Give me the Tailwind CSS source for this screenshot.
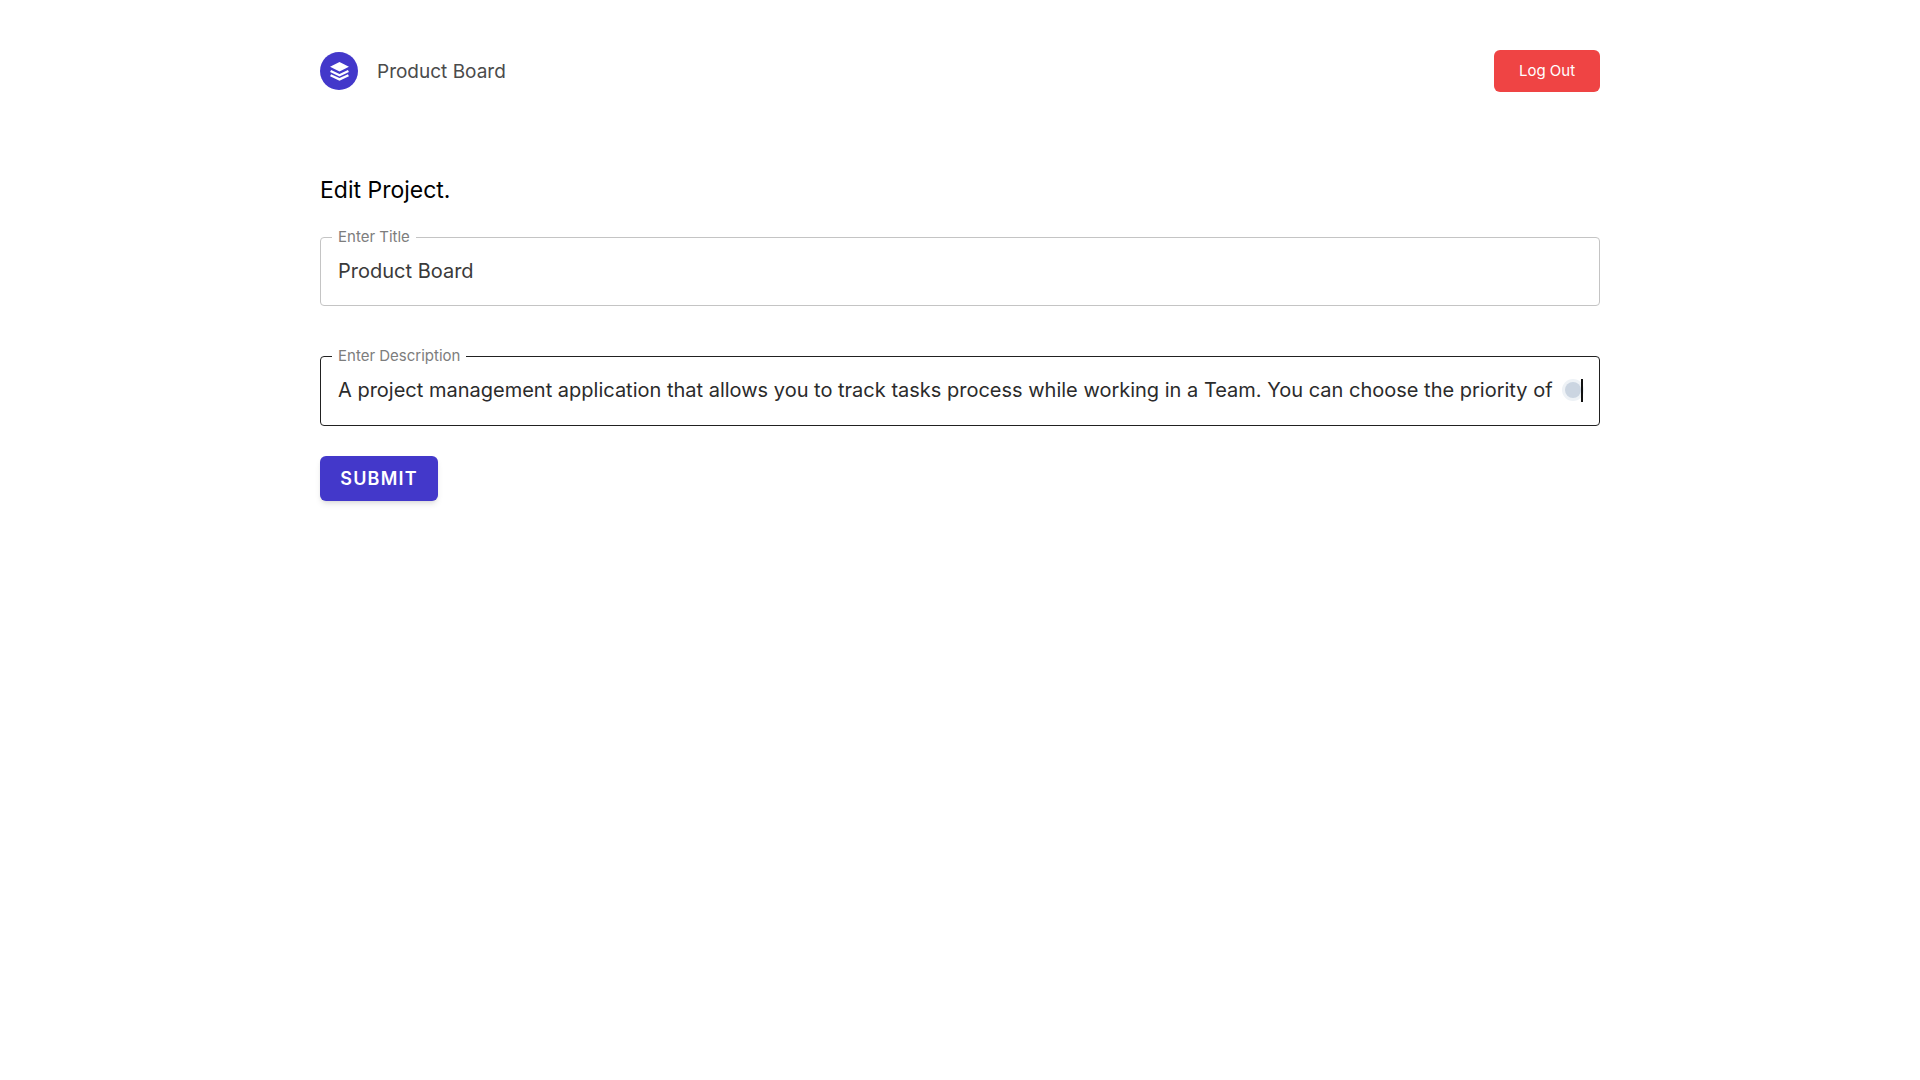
<!DOCTYPE html>
<html lang="en">
<head>
  <meta charset="UTF-8">
  <meta name="viewport" content="width=device-width, initial-scale=1.0">
  <title>Edit Project - Product Board</title>
  <script src="https://cdn.jsdelivr.net/npm/@tailwindcss/browser@4"></script>
</head>
<body class="bg-white min-h-screen font-['Inter',sans-serif]">

  <div class="w-[1280px] mx-auto pt-[50px]">
    <!-- header -->
    <header class="flex items-center justify-between h-[42px]">
      <div class="flex items-center gap-[19px]">
        <div class="w-[38px] h-[38px] rounded-full bg-[#4338ca] flex items-center justify-center">
          <svg class="w-[21px] h-[21px]" viewBox="0 0 20 20" fill="none">
            <path d="M10 1 L19 5.5 L10 10 L1 5.5 Z" fill="#fff"/>
            <path d="M1.5 9.5 L10 13.5 L18.5 9.5" stroke="#fff" stroke-width="2.2"/>
            <path d="M1.5 13.5 L10 17.5 L18.5 13.5" stroke="#fff" stroke-width="2.2"/>
          </svg>
        </div>
        <span class="pt-px text-[19px] leading-7 text-[#4b4b4b]">Product Board</span>
      </div>
      <button class="w-[106px] h-[42px] rounded-md bg-[#ef4444] text-white text-[15px] font-normal">Log Out</button>
    </header>

    <h1 class="mt-[82px] text-[23px] leading-8 font-normal text-black">Edit Project.</h1>

    <form>
      <fieldset class="mt-[23px] border border-[#c4c4c4] rounded px-[17px] pb-2">
        <legend class="ml-[-6px] px-[6px] text-[15px] leading-4 text-[#7d7d7d]">Enter Title</legend>
        <input type="text" value="Product Board" class="w-full h-[52px] text-[20px] text-[#3a3a3a] outline-none">
      </fieldset>

      <fieldset class="relative mt-[42px] border border-[#212121] rounded px-[17px] pb-[9px]">
        <legend class="ml-[-6px] px-[6px] text-[15px] leading-4 text-[#7d7d7d]">Enter Description</legend>
        <input type="text" value="A project management application that allows you to track tasks process while working in a Team. You can choose the priority of" class="w-full h-[52px] text-[20px] text-[#2b2b2b] outline-none">
        <!-- focus ripple + caret at the end of the field -->
        <span class="absolute left-[1241px] top-[15px] w-[22px] h-[22px] rounded-full bg-[#eef2f6] flex items-center justify-center">
          <span class="w-4 h-4 rounded-full bg-[#cbd5e1]"></span>
        </span>
        <span class="absolute left-[1260px] top-[15px] w-[2px] h-[23px] bg-[#111]"></span>
      </fieldset>

      <button type="submit" class="mt-[30px] w-[118px] h-[45px] rounded-md bg-[#4338ca] text-white text-lg font-semibold tracking-[1.2px] shadow-md">SUBMIT</button>
    </form>
  </div>

</body>
</html>
